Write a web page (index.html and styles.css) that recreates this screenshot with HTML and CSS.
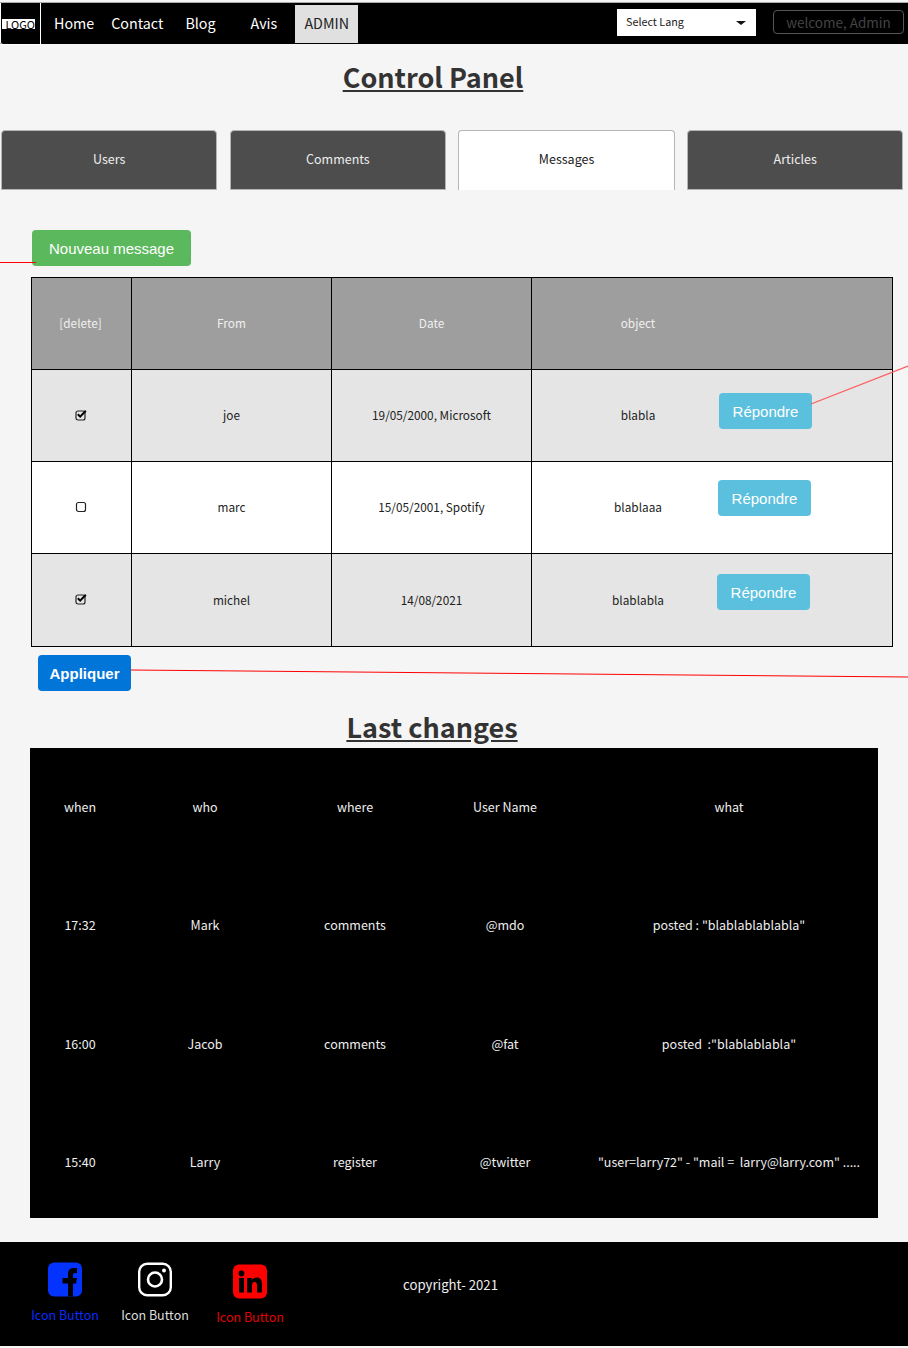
FILE: index.html
```html
<!DOCTYPE html>
<html lang="fr">
<head>
  <meta charset="UTF-8">
  <meta name="viewport" content="width=device-width, initial-scale=1.0">
  <title>Control Panel</title>
  <link rel="stylesheet" href="styles.css">
</head>
<body>
  <!-- Nav -->
  <nav class="nav">
    <div class="logo"><span class="logo-text">LOGO</span></div>
    <a class="nav-link nav-home">Home</a>
    <a class="nav-link nav-contact">Contact</a>
    <a class="nav-link nav-blog">Blog</a>
    <a class="nav-link nav-avis">Avis</a>
    <a class="nav-link nav-admin">ADMIN</a>
    <div class="lang">
      <span>Select Lang</span>
      <span class="caret"></span>
    </div>
    <div class="welcome">welcome, Admin</div>
  </nav>

  <h1 class="title">Control Panel</h1>

  <!-- Tabs -->
  <div class="tabs">
    <div class="tab">Users</div>
    <div class="tab">Comments</div>
    <div class="tab tab-active">Messages</div>
    <div class="tab">Articles</div>
  </div>

  <button class="btn btn-new">Nouveau message</button>

  <!-- Messages table -->
  <table class="messages">
    <tr class="head">
      <th class="col-del">[delete]</th>
      <th class="col-from">From</th>
      <th class="col-date">Date</th>
      <th class="col-object"><span class="object-text">object</span></th>
    </tr>
    <tr class="grey">
      <td>
        <svg class="check" viewBox="0 0 12 12"><rect x="1" y="2" width="9" height="9" rx="2" fill="none" stroke="#222" stroke-width="1.2"/><path d="M2.8 5.2 5.2 7.6 10.8 1.8" fill="none" stroke="#000" stroke-width="2"/></svg>
      </td>
      <td>joe</td>
      <td>19/05/2000, Microsoft</td>
      <td><div class="object-cell"><span class="object-text">blabla</span><button class="btn btn-reply reply-1">Répondre</button></div></td>
    </tr>
    <tr>
      <td>
        <svg class="check" viewBox="0 0 12 12"><rect x="1.5" y="1.5" width="9" height="9" rx="2" fill="none" stroke="#222" stroke-width="1.2"/></svg>
      </td>
      <td>marc</td>
      <td>15/05/2001, Spotify</td>
      <td><div class="object-cell"><span class="object-text">blablaaa</span><button class="btn btn-reply reply-2">Répondre</button></div></td>
    </tr>
    <tr class="grey">
      <td>
        <svg class="check" viewBox="0 0 12 12"><rect x="1" y="2" width="9" height="9" rx="2" fill="none" stroke="#222" stroke-width="1.2"/><path d="M2.8 5.2 5.2 7.6 10.8 1.8" fill="none" stroke="#000" stroke-width="2"/></svg>
      </td>
      <td>michel</td>
      <td>14/08/2021</td>
      <td><div class="object-cell"><span class="object-text">blablabla</span><button class="btn btn-reply reply-3">Répondre</button></div></td>
    </tr>
  </table>

  <button class="btn btn-apply">Appliquer</button>

  <h2 class="title title-changes">Last changes</h2>

  <!-- Last changes -->
  <table class="changes">
    <tr>
      <td class="c-when">when</td>
      <td class="c-mid">who</td>
      <td class="c-mid">where</td>
      <td class="c-mid">User Name</td>
      <td class="c-what">what</td>
    </tr>
    <tr>
      <td>17:32</td>
      <td>Mark</td>
      <td>comments</td>
      <td>@mdo</td>
      <td>posted : "blablablablabla"</td>
    </tr>
    <tr>
      <td>16:00</td>
      <td>Jacob</td>
      <td>comments</td>
      <td>@fat</td>
      <td>posted &nbsp;:"blablablabla"</td>
    </tr>
    <tr class="last">
      <td>15:40</td>
      <td>Larry</td>
      <td>register</td>
      <td>@twitter</td>
      <td>"user=larry72" - "mail = &nbsp;larry@larry.com" .....</td>
    </tr>
  </table>

  <!-- Footer -->
  <footer class="footer">
    <div class="social social-fb">
      <svg class="social-icon" viewBox="0 0 34 34"><rect width="34" height="34" rx="6" fill="#0433ff"/><path d="M20 34V21H14.5V15.5H20V11C20 7 22.5 5.5 26 5.5H29V10.5H27C25.5 10.5 25 11.2 25 12.5V15.5H29L28 21H25V34Z" fill="#000"/></svg>
      <span>Icon Button</span>
    </div>
    <div class="social social-ig">
      <svg class="social-icon" viewBox="0 0 34 34"><rect x="1.2" y="1.2" width="31.6" height="31.6" rx="8" fill="none" stroke="#fff" stroke-width="2.4"/><circle cx="17" cy="17" r="7" fill="none" stroke="#fff" stroke-width="2.6"/><circle cx="26" cy="8" r="2" fill="#fff"/></svg>
      <span>Icon Button</span>
    </div>
    <div class="social social-in">
      <svg class="social-icon" viewBox="0 0 34 34"><rect width="34" height="34" rx="6" fill="#ff0000"/><circle cx="8.5" cy="9" r="2.9" fill="#000"/><rect x="6" y="13.5" width="5" height="14.5" fill="#000"/><path d="M14 13.5H18.7V15.6C19.6 14.2 21.3 13.1 23.6 13.1 27.6 13.1 29 15.7 29 19.6V28H24V20.5C24 18.7 23.4 17.4 21.6 17.4 19.8 17.4 19 18.8 19 20.6V28H14Z" fill="#000"/></svg>
      <span>Icon Button</span>
    </div>
    <div class="copyright">copyright- 2021</div>
  </footer>

  <!-- Red annotation lines, they sit over the page -->
  <svg class="notes" viewBox="0 0 908 1348">
    <path d="M0 262.5H36" stroke="#ff0000" stroke-width="1.2" fill="none"/>
    <path d="M811 404 908 366" stroke="#ff5a5a" stroke-width="1.2" fill="none"/>
    <path d="M131 670 908 677" stroke="#ff0000" fill="none"/>
  </svg>
</body>
</html>
```

FILE: styles.css
```css
/* Universal Styles */
body {
  font-family: "Noto Sans CJK SC", "Noto Sans", sans-serif;
  margin: 0;
  padding: 0;
  background: #f5f5f5;
  color: #000;
  width: 908px;
  height: 1348px;
  position: relative;
  overflow: hidden;
}

/* Nav */
.nav {
  display: flex;
  align-items: center;
  height: 41px;
  margin-top: 2px;
  background: #000;
  border-top: 1px solid #aaa;
  position: relative;
}

.logo {
  width: 38px;
  height: 41px;
  margin-bottom: -1px;
  border: 1px solid #fff;
  border-width: 0 1px 1px 1px;
  border-radius: 0 0 0 3px;
  display: flex;
  align-items: center;
  padding-left: 1px;
  box-sizing: content-box;
}

.logo-text {
  width: 33px;
  height: 10px;
  background: #fff;
  color: #000;
  font-size: 11px;
  line-height: 10px;
  text-align: right;
}

.nav-link {
  color: #fff;
  font-size: 14.3px;
  line-height: 36px;
  padding-bottom: 2px;
}

.nav-home { margin-left: 13px; }
.nav-contact { margin-left: 17px; }
.nav-blog { margin-left: 22px; }
.nav-avis { margin-left: 35px; }

.nav-admin {
  margin-left: 18px;
  width: 63px;
  text-align: center;
  background: #e0e0e0;
  color: #222;
}

.lang {
  margin-left: auto;
  width: 139px;
  height: 27px;
  margin-top: -3px;
  box-sizing: border-box;
  padding: 0 10px 3px 9px;
  background: #fff;
  color: #222;
  font-size: 10.8px;
  display: flex;
  align-items: center;
  justify-content: space-between;
}

.caret {
  margin-top: 5px;
  border-left: 5px solid transparent;
  border-right: 5px solid transparent;
  border-top: 4px solid #111;
}

.welcome {
  margin: -4px 4px 0 17px;
  width: 131px;
  height: 24px;
  box-sizing: border-box;
  border: 1px solid #555;
  border-radius: 4px;
  color: #444;
  font-size: 13.5px;
  line-height: 23px;
  text-align: center;
}

/* Headings */
.title {
  margin: 14px 0 0 0;
  height: 38px;
  font-size: 27px;
  line-height: 38px;
  font-weight: 700;
  color: #333;
  text-align: center;
  text-decoration: underline;
  padding-right: 42px;
  box-sizing: border-box;
}

.title-changes {
  margin: 19px 0 0 0;
  height: 37px;
  line-height: 34px;
  padding-right: 44px;
}

/* Tabs */
.tabs {
  display: grid;
  grid-template-columns: repeat(4, 216.4px);
  column-gap: 12.3px;
  margin: 34px 0 0 1px;
}

.tab {
  height: 60px;
  box-sizing: border-box;
  background: #4d4d4d;
  border: 1px solid #b5b5b5;
  border-radius: 4px 4px 0 0;
  color: #eee;
  font-size: 12.5px;
  line-height: 56px;
  text-align: center;
}

.tab-active {
  background: #fff;
  color: #222;
  border-bottom: none;
}

/* Buttons */
.btn {
  display: block;
  height: 36px;
  padding: 0;
  border: none;
  border-radius: 4px;
  color: #fff;
  font-family: "Liberation Sans", sans-serif;
  font-size: 15px;
  cursor: pointer;
}

.btn-new {
  width: 159px;
  margin: 40px 0 0 32px;
  background: #5cb85c;
}

.btn-reply {
  width: 93px;
  flex: none;
  background: #5bc0de;
}

.reply-1 { margin: 0 0 7px 1px; }
.reply-2 { margin: 0 0 17px 0; }
.reply-3 { margin: 0 0 14px -1px; }

.btn-apply {
  width: 93px;
  margin: 8px 0 0 38px;
  background: #0275d8;
  font-weight: 700;
}

/* Messages table */
.messages {
  border-collapse: collapse;
  table-layout: fixed;
  width: 862px;
  margin: 11px 0 0 31px;
  font-size: 11.8px;
  text-align: center;
  background: #fff;
}

.messages th, .messages td {
  border: 1px solid #000;
  padding: 0 0 2px 0;
  height: 89px;
}

.messages tr:last-child td { height: 90px; }

.messages th {
  background: #9e9e9e;
  color: #f0f0f0;
  font-weight: 400;
}

.col-del {
  width: 97px;
  padding-right: 2px !important;
}

.col-from { width: 199px; }
.col-date { width: 199px; }

.col-object {
  text-align: left;
  padding-left: 26px !important;
}

.grey td { background: #e5e5e5; }

.messages td { color: #222; }

.object-cell {
  display: flex;
  align-items: center;
  padding-left: 26px;
}

.object-text {
  display: inline-block;
  width: 160px;
  text-align: center;
  flex: none;
}

.check {
  width: 12px;
  height: 12px;
  display: block;
  margin: 0 auto;
  transform: translate(-1px, 0);
}

/* Last changes */
.changes {
  border-collapse: collapse;
  table-layout: fixed;
  width: 848px;
  height: 470px;
  margin: 1px 0 0 30px;
  background: #000;
  color: #eee;
  font-size: 12.5px;
  text-align: center;
}

.changes td {
  box-sizing: border-box;
  height: 118.3px;
  padding: 50px 0 0 0;
  line-height: 18px;
  vertical-align: top;
  white-space: nowrap;
}

.changes .last td { height: 115px; }

.c-when { width: 100px; }
.c-mid { width: 150px; }
.c-what { width: 298px; }

/* Footer */
.footer {
  display: flex;
  align-items: flex-start;
  height: 104px;
  margin-top: 24px;
  background: #000;
}

.social {
  width: 90px;
  margin-top: 20px;
  display: flex;
  flex-direction: column;
  align-items: center;
  font-size: 12.5px;
  line-height: 18px;
}

.social-icon {
  width: 34px;
  height: 35px;
  margin-bottom: 9px;
}

.social-fb { margin-left: 20px; color: #0a2bff; }
.social-ig { color: #ddd; }
.social-in { margin: 22px 0 0 5px; color: #e00000; }

.copyright {
  margin: 33px 0 0 108px;
  color: #eee;
  font-size: 13.2px;
  line-height: 20px;
}

/* Annotation overlay */
.notes {
  position: absolute;
  left: 0;
  top: 0;
  width: 908px;
  height: 1348px;
  pointer-events: none;
}
```
